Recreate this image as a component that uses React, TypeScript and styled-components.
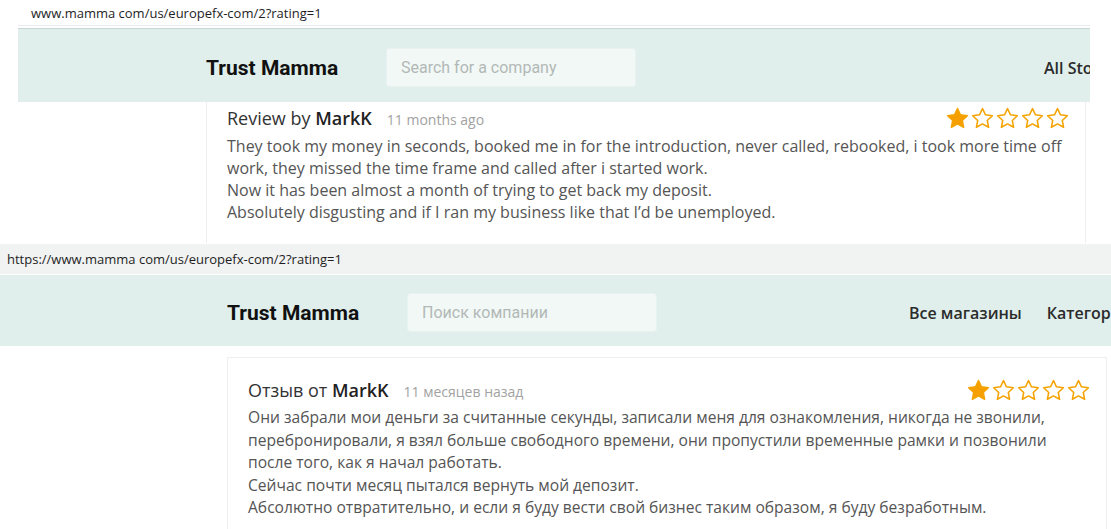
import React from "react";
import styled, { createGlobalStyle } from "styled-components";

const Global = createGlobalStyle`
  html, body { margin: 0; padding: 0; background: #fff; }
  body { width: 1111px; height: 529px; overflow: hidden; font-family: "Open Sans", "Noto Sans", sans-serif; }
`;

const Page = styled.div`
  width: 1111px;
  height: 529px;
  display: flex;
  flex-direction: column;
  overflow: hidden;
`;

const Shot = styled.section<{ $h: number }>`
  height: ${(p) => p.$h}px;
  flex: none;
  display: flex;
  flex-direction: column;
  overflow: hidden;
  background: #fff;
`;

const UrlLine = styled.div<{ $bar?: boolean }>`
  flex: none;
  height: ${(p) => (p.$bar ? 30 : 25)}px;
  display: flex;
  align-items: center;
  padding-left: ${(p) => (p.$bar ? 7 : 13)}px;
  margin: ${(p) => (p.$bar ? "1px 0 1px" : "0 21px 0 18px")};
  background: ${(p) => (p.$bar ? "#f1f2f2" : "#fff")};
  border-bottom: ${(p) => (p.$bar ? "none" : "1px solid #e9ecec")};
  font-family: "Segoe UI", "Open Sans", "Noto Sans", sans-serif;
  font-size: 13px;
  color: #1e1e1e;
  white-space: nowrap;
`;

const Header = styled.header<{ $full?: boolean; $pad: number }>`
  flex: none;
  box-sizing: border-box;
  height: ${(p) => (p.$full ? 71 : 74)}px;
  margin: ${(p) => (p.$full ? "0" : "2px 21px 0 18px")};
  background: #e0efec;
  border-top: ${(p) => (p.$full ? "none" : "1px solid #c9d5d3")};
  display: flex;
  align-items: center;
  padding: 4px 0 0 ${(p) => p.$pad}px;
  overflow: hidden;
  white-space: nowrap;
`;

const Logo = styled.div`
  font-family: Roboto, "Liberation Sans", sans-serif;
  font-weight: 700;
  font-size: 21px;
  color: #111;
  width: 180px;
  flex: none;
`;

const Search = styled.div`
  width: 250px;
  height: 39px;
  flex: none;
  box-sizing: border-box;
  background: #f1f8f6;
  border: 1px solid #e8f2f0;
  border-radius: 3px;
  display: flex;
  align-items: center;
  padding-left: 14px;
  font-family: Roboto, "Liberation Sans", sans-serif;
  font-size: 16px;
  color: #b3b8b7;
`;

const Nav = styled.nav<{ $left: number }>`
  display: flex;
  gap: 25px;
  margin-left: ${(p) => p.$left}px;
  font-family: "Open Sans", sans-serif;
  font-size: 16px;
  font-weight: 600;
  color: #2b2b2b;
  flex: none;
`;

const CardArea = styled.div<{ $left: number; $top: number }>`
  flex: 1;
  padding-left: ${(p) => p.$left}px;
  padding-top: ${(p) => p.$top}px;
  display: flex;
`;

const Card = styled.article<{ $top?: boolean; $pt: number }>`
  width: 880px;
  flex: none;
  box-sizing: border-box;
  border-left: 1px solid #eeeeee;
  border-right: 1px solid #eeeeee;
  border-top: ${(p) => (p.$top ? "1px solid #eeeeee" : "none")};
  padding: ${(p) => p.$pt}px 16px 0 20px;
  display: flex;
  flex-direction: column;
`;

const CardHead = styled.div`
  display: flex;
  align-items: center;
  justify-content: space-between;
  height: 24px;
`;

const Title = styled.div`
  display: flex;
  align-items: baseline;
  gap: 15px;
  font-size: 18px;
  color: #333;
`;

const Author = styled.b`
  font-weight: 600;
  color: #222;
`;

const Ago = styled.span`
  font-size: 14px;
  color: #a2a2a2;
`;

const Stars = styled.div`
  display: flex;
  gap: 2px;
`;

const Body = styled.div<{ $lh: number; $mt: number; $fs: number }>`
  margin-top: ${(p) => p.$mt}px;
  font-size: ${(p) => p.$fs}px;
  line-height: ${(p) => p.$lh}px;
  color: #555;
  white-space: nowrap;
`;

const Star = ({ filled }: { filled: boolean }) => (
  <svg width="23" height="22" viewBox="0 0 24 23">
    <path
      d="M12 1.6l3.1 6.6 7.2.9-5.3 5 1.4 7.1L12 17.7l-6.4 3.5 1.4-7.1-5.3-5 7.2-.9z"
      fill={filled ? "#f59f00" : "#fff"}
      stroke="#f5a300"
      strokeWidth="1.6"
      strokeLinejoin="round"
    />
  </svg>
);

const Rating = ({ value }: { value: number }) => (
  <Stars>
    {[1, 2, 3, 4, 5].map((i) => (
      <Star key={i} filled={i <= value} />
    ))}
  </Stars>
);

export default function App() {
  return (
    <Page>
      <Global />
      <Shot $h={243}>
        <UrlLine>www.mamma com/us/europefx-com/2?rating=1</UrlLine>
        <Header $pad={188}>
          <Logo>Trust Mamma</Logo>
          <Search>Search for a company</Search>
          <Nav $left={408}>
            <span>All Stores</span>
            <span>Categories</span>
          </Nav>
        </Header>
        <CardArea $left={206} $top={0}>
          <Card $pt={4}>
            <CardHead>
              <Title>
                <span>
                  Review by <Author>MarkK</Author>
                </span>
                <Ago>11 months ago</Ago>
              </Title>
              <Rating value={1} />
            </CardHead>
            <Body $lh={22} $mt={5} $fs={16}>
              They took my money in seconds, booked me in for the introduction, never called, rebooked, i took more time off
              <br />
              work, they missed the time frame and called after i started work.
              <br />
              Now it has been almost a month of trying to get back my deposit.
              <br />
              Absolutely disgusting and if I ran my business like that I’d be unemployed.
            </Body>
          </Card>
        </CardArea>
      </Shot>
      <Shot $h={286}>
        <UrlLine $bar>https://www.mamma com/us/europefx-com/2?rating=1</UrlLine>
        <Header $full $pad={227}>
          <Logo>Trust Mamma</Logo>
          <Search>Поиск компании</Search>
          <Nav $left={252}>
            <span>Все магазины</span>
            <span>Категории</span>
          </Nav>
        </Header>
        <CardArea $left={227} $top={11}>
          <Card $top $pt={20}>
            <CardHead>
              <Title>
                <span>
                  Отзыв от <Author>MarkK</Author>
                </span>
                <Ago>11 месяцев назад</Ago>
              </Title>
              <Rating value={1} />
            </CardHead>
            <Body $lh={22.5} $mt={4} $fs={15.6}>
              Они забрали мои деньги за считанные секунды, записали меня для ознакомления, никогда не звонили,
              <br />
              перебронировали, я взял больше свободного времени, они пропустили временные рамки и позвонили
              <br />
              после того, как я начал работать.
              <br />
              Сейчас почти месяц пытался вернуть мой депозит.
              <br />
              Абсолютно отвратительно, и если я буду вести свой бизнес таким образом, я буду безработным.
            </Body>
          </Card>
        </CardArea>
      </Shot>
    </Page>
  );
}
